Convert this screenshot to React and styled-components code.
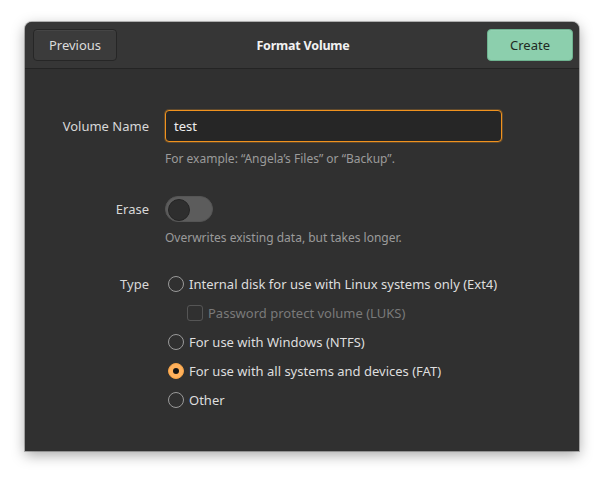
import React from "react";
import styled, { createGlobalStyle } from "styled-components";

const Global = createGlobalStyle`
  html, body { margin: 0; padding: 0; background: #ffffff; }
  body { font-family: "Noto Sans", "Open Sans", sans-serif; }
`;

const Page = styled.div`
  width: 605px;
  height: 480px;
  padding: 22px 0 0 25px;
  box-sizing: border-box;
`;

const Window = styled.div`
  width: 554px;
  height: 429px;
  background: #303030;
  border-radius: 7px 7px 0 0;
  box-shadow: 0 0 0 1px rgba(0,0,0,0.25), 0 4px 14px rgba(0,0,0,0.35);
  display: flex;
  flex-direction: column;
  overflow: hidden;
`;

const Header = styled.div`
  height: 46px;
  background: #363636;
  border-bottom: 1px solid #242424;
  display: grid;
  grid-template-columns: 1fr auto 1fr;
  align-items: center;
  padding: 0 6px 0 8px;
`;

const Button = styled.button`
  height: 32px;
  width: ${p => p.$w}px;
  border-radius: 4px;
  font-family: inherit;
  font-size: 13px;
  cursor: pointer;
  justify-self: ${p => p.$align};
  background: ${p => (p.$suggested ? "#8ccfad" : "#3b3b3b")};
  color: ${p => (p.$suggested ? "#1f2a24" : "#dcdcdc")};
  border: 1px solid ${p => (p.$suggested ? "#6eb390" : "#262626")};
  box-shadow: inset 0 1px rgba(255,255,255,0.05);
`;

const Title = styled.div`
  color: #f2f2f2;
  font-weight: 700;
  font-size: 12.5px;
  letter-spacing: -0.2px;
`;

const Body = styled.div`
  display: grid;
  grid-template-columns: 124px 1fr;
  column-gap: 16px;
  padding: 41px 77px 0 0;
  color: #dedede;
  font-size: 13px;
`;

const Label = styled.div`
  text-align: right;
  line-height: ${p => p.$lh}px;
  color: #d8d8d8;
`;

const Field = styled.div`
  display: flex;
  flex-direction: column;
  margin-bottom: ${p => p.$mb}px;
`;

const Input = styled.div`
  height: 32px;
  box-sizing: border-box;
  border: 1px solid #f0921e;
  border-radius: 4px;
  background: #262626;
  color: #eeeeee;
  padding: 0 8px;
  display: flex;
  align-items: center;
  box-shadow: 0 0 0 1px rgba(240,146,30,0.25);
`;

const Hint = styled.div`
  color: #9b9b9b;
  font-size: 12px;
  margin-top: ${p => p.$mt}px;
`;

const Switch = styled.div`
  width: 48px;
  height: 26px;
  box-sizing: border-box;
  border-radius: 13px;
  background: #5c5c5c;
  border: 1px solid #555;
  padding: 2px;
  display: flex;
`;

const Knob = styled.div`
  width: 20px;
  height: 20px;
  border-radius: 50%;
  background: #2e2e2e;
  border: 1px solid #242424;
`;

const Options = styled.div`
  display: flex;
  flex-direction: column;
  gap: 9px;
`;

const Option = styled.div`
  display: flex;
  align-items: center;
  gap: 5px;
  height: 20px;
  padding-left: ${p => (p.$indent ? 22 : 3)}px;
  color: ${p => (p.$disabled ? "#7a7a7a" : "#dedede")};
`;

const Radio = styled.div`
  width: 16px;
  height: 16px;
  box-sizing: border-box;
  border-radius: 50%;
  border: 1px solid ${p => (p.$checked ? "#f5a347" : "#9a9a9a")};
  background: ${p => (p.$checked ? "#ffb15c" : "transparent")};
  display: flex;
  align-items: center;
  justify-content: center;
  &::after {
    content: "";
    display: ${p => (p.$checked ? "block" : "none")};
    width: 6px;
    height: 6px;
    border-radius: 50%;
    background: #151515;
  }
`;

const Check = styled.div`
  width: 16px;
  height: 16px;
  box-sizing: border-box;
  border-radius: 3px;
  border: 1px solid #555;
`;

export default function App() {
  return (
    <Page>
      <Global />
      <Window>
        <Header>
          <Button $w={84} $align="start">Previous</Button>
          <Title>Format Volume</Title>
          <Button $w={86} $align="end" $suggested>Create</Button>
        </Header>
        <Body>
          <Label $lh={32}>Volume Name</Label>
          <Field $mb={29}>
            <Input>test</Input>
            <Hint $mt={8}>For example: “Angela’s Files” or “Backup”.</Hint>
          </Field>
          <Label $lh={26}>Erase</Label>
          <Field $mb={28}>
            <Switch><Knob /></Switch>
            <Hint $mt={7}>Overwrites existing data, but takes longer.</Hint>
          </Field>
          <Label $lh={20}>Type</Label>
          <Options>
            <Option><Radio />Internal disk for use with Linux systems only (Ext4)</Option>
            <Option $indent $disabled><Check />Password protect volume (LUKS)</Option>
            <Option><Radio />For use with Windows (NTFS)</Option>
            <Option><Radio $checked />For use with all systems and devices (FAT)</Option>
            <Option><Radio />Other</Option>
          </Options>
        </Body>
      </Window>
    </Page>
  );
}
